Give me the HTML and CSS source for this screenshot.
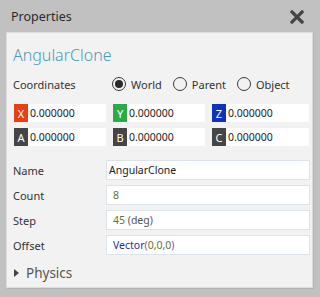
FILE: index.html
```html
<!DOCTYPE html>
<html>
<head>
<meta charset="utf-8">
<link rel="stylesheet" href="styles.css">
</head>
<body>
<div class="window">
  <div class="header">
    <span class="header-title">Properties</span>
    <svg class="close" width="14" height="14" viewBox="0 0 14 14"><path d="M2 2 L12 12 M12 2 L2 12" stroke="#454545" stroke-width="3.2" stroke-linecap="square"/></svg>
  </div>
  <div class="panel">
    <div class="title">AngularClone</div>
    <div class="coords-row">
      <span class="label">Coordinates</span>
      <div class="radios">
        <span class="radio checked"><span class="circle"></span>World</span>
        <span class="radio"><span class="circle"></span>Parent</span>
        <span class="radio"><span class="circle"></span>Object</span>
      </div>
    </div>
    <div class="vec-grid">
      <div class="vec"><span class="tag tag-x">X</span><span class="val">0.000000</span></div>
      <div class="vec"><span class="tag tag-y">Y</span><span class="val">0.000000</span></div>
      <div class="vec"><span class="tag tag-z">Z</span><span class="val">0.000000</span></div>
      <div class="vec"><span class="tag tag-d">A</span><span class="val">0.000000</span></div>
      <div class="vec"><span class="tag tag-d">B</span><span class="val">0.000000</span></div>
      <div class="vec"><span class="tag tag-d">C</span><span class="val">0.000000</span></div>
    </div>
    <div class="props">
      <span class="plabel">Name</span><div class="field field-name"><span>AngularClone</span></div>
      <span class="plabel">Count</span><div class="field"><span><span class="num">8</span></span></div>
      <span class="plabel">Step</span><div class="field"><span><span class="num">45</span> <span class="unit">(deg)</span></span></div>
      <span class="plabel">Offset</span><div class="field"><span><span class="fn">Vector</span><span class="par">(</span><span class="num">0,0,0</span><span class="par">)</span></span></div>
    </div>
    <div class="section"><span class="tri"></span>Physics</div>
  </div>
</div>
</body>
</html>
```

FILE: styles.css
```css
html, body {
  margin: 0;
  padding: 0;
}
body {
  background: #c1c1c1;
  font-family: "Segoe UI", "Noto Sans", sans-serif;
  color: #333;
  width: 320px;
  height: 297px;
  overflow: hidden;
}
.header {
  height: 32px;
  display: flex;
  align-items: center;
  justify-content: space-between;
  padding: 0 16px 0 11px;
}
.header-title {
  font-size: 12.5px;
  color: #2a2a2a;
}
.close {
  display: block;
  margin-top: 2px;
}
.panel {
  margin: 0 7px 0 6px;
  height: 256px;
  background: #f2f2f2;
  border: 1px solid #dcdcdc;
  box-shadow: 1px 1px 0 #b3b3b3;
  padding: 11px 5px 0 6px;
  box-sizing: border-box;
}
.title {
  font-size: 16px;
  font-weight: 300;
  color: #4b98bd;
  line-height: 22px;
  height: 22px;
}
.coords-row {
  display: flex;
  align-items: center;
  margin-top: 7px;
  height: 22px;
}
.label, .plabel {
  font-size: 11px;
  color: #333;
}
.coords-row .label {
  width: 99px;
}
.radios {
  display: flex;
  gap: 11px;
}
.radio {
  display: flex;
  align-items: center;
  font-size: 11px;
  color: #333;
  gap: 5px;
}
.radio .circle {
  width: 14px;
  height: 14px;
  border: 1px solid #3a3a3a;
  border-radius: 50%;
  box-sizing: border-box;
  display: flex;
  align-items: center;
  justify-content: center;
}
.radio.checked .circle::after {
  content: "";
  width: 8px;
  height: 8px;
  border-radius: 50%;
  background: #2a2a2a;
}
.vec-grid {
  display: grid;
  grid-template-columns: 92px 92px 97px;
  column-gap: 7px;
  row-gap: 6px;
  margin-top: 9px;
  padding-left: 1px;
}
.vec {
  display: flex;
  height: 18px;
  background: #fff;
  align-items: center;
}
.tag {
  width: 14px;
  height: 18px;
  display: flex;
  align-items: center;
  justify-content: center;
  color: #fff;
  font-size: 11px;
}
.tag-x { background: #ea3f12; }
.tag-y { background: #2aab47; }
.tag-z { background: #1031bd; }
.tag-d { background: #454545; }
.val {
  font-size: 10.5px;
  color: #222;
  padding-left: 2px;
}
.props {
  display: grid;
  grid-template-columns: 93px 204px;
  row-gap: 5px;
  margin-top: 14px;
  align-items: center;
}
.field {
  height: 20px;
  background: #fff;
  border: 1px solid #dde3ea;
  box-sizing: border-box;
  font-size: 10.5px;
  color: #222;
  display: flex;
  align-items: center;
  padding-left: 6px;
  white-space: pre;
}
.field-name {
  padding-left: 2px;
}
.num { color: #5e7532; }
.unit { color: #555; }
.fn { color: #2b2b9a; }
.par { color: #a83ca8; }
.section {
  display: flex;
  align-items: center;
  margin-top: 9px;
  font-size: 13.5px;
  color: #555;
  padding-left: 1px;
}
.tri {
  width: 0;
  height: 0;
  border-top: 4px solid transparent;
  border-bottom: 4px solid transparent;
  border-left: 5px solid #444;
  margin-right: 7px;
}
```
